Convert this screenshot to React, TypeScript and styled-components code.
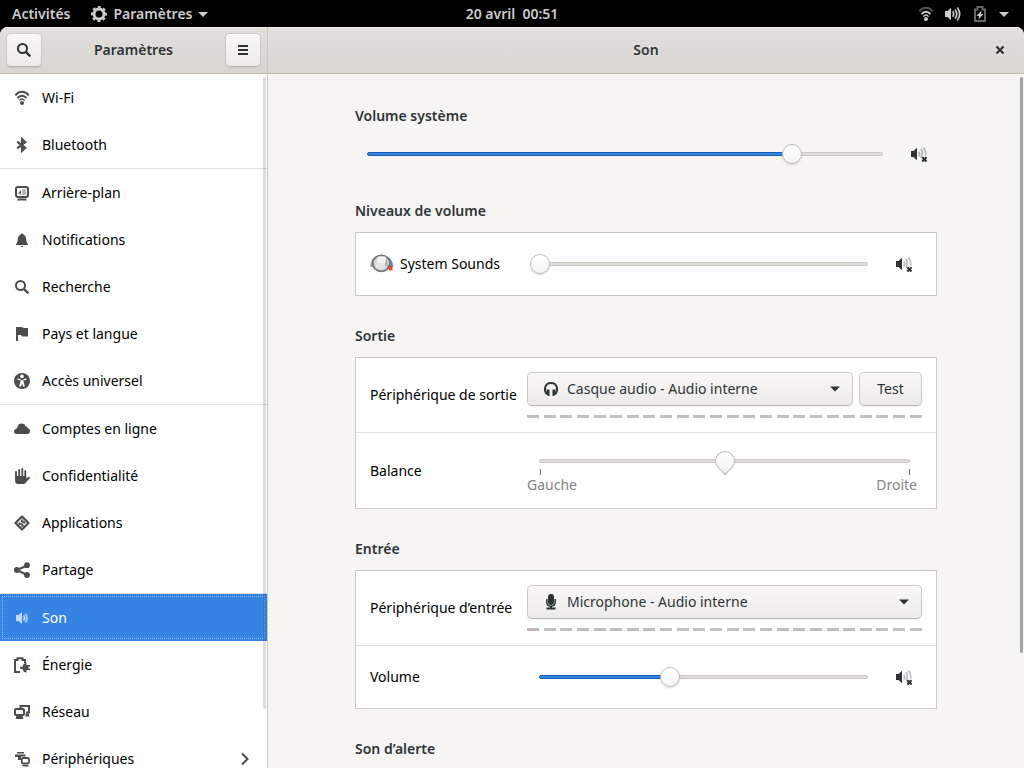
import React, { useState } from "react";
import styled, { createGlobalStyle, css } from "styled-components";

const GlobalStyle = createGlobalStyle`
  * { box-sizing: border-box; }
  html, body, #root { height: 100%; }
  body {
    margin: 0;
    overflow: hidden;
    background: #000;
    color: #000;
    font: 14px/20px "Noto Sans", "Open Sans", sans-serif;
  }
  button, select, input { font: inherit; color: inherit; margin: 0; }
`;

/* ---------- shell ---------- */

const Screen = styled.div`
  display: flex;
  flex-direction: column;
  height: 100vh;
`;

const TopBar = styled.header`
  display: grid;
  grid-template-columns: 1fr auto 1fr;
  align-items: center;
  flex: none;
  height: 27px;
  padding: 0 12px;
  background: #000;
  color: #ccc;
  font-weight: 600;
`;

const TopGroup = styled.div<{ $end?: boolean }>`
  display: flex;
  align-items: center;
  gap: 21px;
  justify-content: ${(p) => (p.$end ? "flex-end" : "flex-start")};
`;

const TopButton = styled.button`
  display: flex;
  align-items: center;
  gap: 6px;
  padding: 0;
  border: 0;
  background: none;
  white-space: pre;
`;

const StatusButton = styled(TopButton)`
  gap: 11px;
  padding-right: 3px;
`;

const Window = styled.div`
  display: grid;
  grid-template-columns: 268px minmax(0, 1fr);
  grid-template-rows: 47px minmax(0, 1fr);
  flex: 1;
  min-height: 0;
  border-radius: 8px 8px 0 0;
  overflow: hidden;
  background: #f6f5f4;
`;

const HeaderBar = styled.div<{ $divider?: boolean }>`
  display: grid;
  grid-template-columns: 36px 1fr 36px;
  align-items: center;
  padding: 0 6px;
  background: linear-gradient(#e1dedb, #dad6d2);
  border-bottom: 1px solid #bfb8b1;
  border-right: ${(p) => (p.$divider ? "1px solid #cdc7c2" : "0")};
  box-shadow: inset 0 1px #f4f2f1;
  color: #2e3436;
`;

const Title = styled.h1`
  grid-column: 2;
  margin: 0;
  font-size: 14px;
  line-height: 20px;
  font-weight: 600;
  text-align: center;
`;

const raised = css`
  border: 1px solid #cdc7c2;
  border-bottom-color: #bfb8b1;
  border-radius: 5px;
  background: linear-gradient(#f6f5f4 20%, #edebe9);
  box-shadow: inset 0 1px #fff, 0 1px 2px rgba(0, 0, 0, 0.07);
  color: #2e3436;
`;

const HeaderButton = styled.button<{ $flat?: boolean }>`
  display: grid;
  place-items: center;
  width: 36px;
  height: 34px;
  padding: 0;
  ${raised}
  ${(p) => p.$flat && css`
    border-color: transparent;
    background: none;
    box-shadow: none;
  `}
`;

/* ---------- sidebar ---------- */

const Sidebar = styled.nav`
  position: relative;
  min-height: 0;
  overflow: hidden;
  background: #fff;
  border-right: 1px solid #cdc7c2;
`;

const NavGroup = styled.ul`
  margin: 0;
  padding: 0;
  list-style: none;
  & + & { border-top: 1px solid #dfdfde; }
`;

const NavLink = styled.a<{ $active?: boolean }>`
  display: flex;
  align-items: center;
  gap: 12px;
  height: 47px;
  padding: 0 14px;
  color: #000;
  text-decoration: none;
  & > svg { color: #4c4c4c; flex: none; }
  & > svg:last-child { margin-left: auto; }
  ${(p) => p.$active && css`
    background: #3584e4;
    color: #fff;
    outline: 1px dotted rgba(255, 255, 255, 0.45);
    outline-offset: -3px;
    & > svg { color: #c2daf7; }
  `}
`;

const ScrollThumb = styled.div<{ $strong?: boolean }>`
  position: absolute;
  top: 3px;
  right: 1px;
  width: 3px;
  height: ${(p) => (p.$strong ? "83%" : "91%")};
  border-radius: 2px;
  background: ${(p) => (p.$strong ? "#a3a5a5" : "rgba(46, 52, 54, 0.17)")};
`;

/* ---------- panel ---------- */

const Panel = styled.main`
  position: relative;
  min-height: 0;
  overflow: hidden;
  padding: 32px 86px 0;
`;

const Column = styled.div`
  display: flex;
  flex-direction: column;
  gap: 30px;
  max-width: 582px;
  margin: 0 auto;
`;

const Section = styled.section`
  display: flex;
  flex-direction: column;
  gap: 11px;
`;

const Heading = styled.h2`
  margin: 0;
  font-size: 14px;
  line-height: 20px;
  font-weight: 600;
  color: #2e3436;
`;

const Card = styled.div`
  border: 1px solid #cdc7c2;
  background: #fff;
`;

const Row = styled.div<{ $height: number }>`
  display: grid;
  grid-template-columns: 157px minmax(0, 1fr);
  align-items: center;
  min-height: ${(p) => p.$height}px;
  padding: 0 14px;
  & + & { border-top: 1px solid #e1dfdd; }
`;

const RowLabel = styled.label`
  display: flex;
  align-items: center;
  gap: 6px;
  white-space: nowrap;
`;

const SliderLine = styled.div`
  display: flex;
  align-items: center;
  height: 34px;
`;

const SliderBox = styled.div`
  display: grid;
  align-items: center;
  flex: 1;
  margin: 0 18px 0 12px;
  & > * { grid-area: 1 / 1; }
`;

const Trough = styled.div`
  height: 4px;
  border: 1px solid #cdc7c2;
  border-radius: 2px;
  background: #e1dedb;
`;

const Fill = styled.div`
  height: 4px;
  border: 1px solid #185fb4;
  border-radius: 2px;
  background: #3584e4;
`;

const Range = styled.input<{ $pin?: boolean }>`
  appearance: none;
  width: calc(100% + 18px);
  height: 20px;
  margin: 0 -9px;
  background: none;
  outline: none;
  &::-webkit-slider-thumb {
    appearance: none;
    width: 20px;
    height: 20px;
    border: 1px solid #c3bcb6;
    border-radius: ${(p) => (p.$pin ? "50% 50% 0 50%" : "50%")};
    background: ${(p) => (p.$pin ? "linear-gradient(135deg, #fff 20%, #f1f0ef)" : "linear-gradient(#fff 20%, #f4f3f2)")};
    box-shadow: ${(p) => (p.$pin ? "none" : "0 1px 2px rgba(0, 0, 0, 0.15)")};
    transform: ${(p) => (p.$pin ? "rotate(45deg)" : "none")};
  }
`;

const MuteButton = styled.button`
  display: grid;
  place-items: center;
  width: 36px;
  height: 34px;
  padding: 0;
  border: 0;
  background: none;
  color: #2e3436;
`;

const DeviceField = styled.div`
  display: flex;
  flex-direction: column;
  gap: 9px;
`;

const DeviceControls = styled.div`
  display: flex;
  gap: 6px;
`;

const SelectBox = styled.div`
  display: grid;
  align-items: center;
  flex: 1;
  color: #2e3436;
  & > * { grid-area: 1 / 1; }
  & > svg { pointer-events: none; z-index: 1; margin: 0 10px 0 16px; }
  & > svg:last-child { justify-self: end; }
`;

const Select = styled.select`
  appearance: none;
  width: 100%;
  height: 34px;
  padding: 0 34px 0 39px;
  ${raised}
`;

const TestButton = styled.button`
  width: 63px;
  height: 34px;
  padding: 0;
  ${raised}
`;

const Level = styled.div`
  display: flex;
  justify-content: space-between;
`;

const LevelCell = styled.span<{ $warm?: boolean }>`
  width: 12px;
  height: 3px;
  background: ${(p) => (p.$warm ? "#c4b5b8" : "#c0c0c0")};
`;

const Scale = styled.div`
  display: flex;
  flex-direction: column;
  padding-top: 6px;
`;

const ScaleSlider = styled(SliderBox)`
  margin: 0 12px;
  grid-template-rows: 16px;
  flex: none;
  z-index: 1;
`;

const Ticks = styled.div`
  display: flex;
  justify-content: space-between;
  height: 6px;
  margin: 0 12px 0 13px;
  & > span { width: 1px; background: #77797a; }
`;

const ScaleLabels = styled.div`
  display: flex;
  justify-content: space-between;
  padding-right: 5px;
  color: #828486;
`;

/* ---------- icons ---------- */

const Icon = ({ children, size = 16 }: { children: React.ReactNode; size?: number }) => (
  <svg width={size} height={size} viewBox={`0 0 ${size} ${size}`} fill="currentColor" aria-hidden="true">
    {children}
  </svg>
);

const line = (width: number) => ({ fill: "none", stroke: "currentColor", strokeWidth: width });

const WifiIcon = ({ dim }: { dim?: boolean }) => (
  <Icon>
    <path d="M1.300 5.300C5 .6 11 .6 14.700 5.300" {...line(2)} opacity={dim ? 0.4 : 1} />
    <path d="M3.500 8.100C6 4.900 10 4.900 12.500 8.100" {...line(2)} />
    <path d="M5.400 10.600C7 8.600 9 8.600 10.600 10.600" {...line(1.5)} />
    <circle cx="8" cy="13" r="2" />
  </Icon>
);

const BluetoothIcon = () => (
  <Icon>
    <path d="M3.200 4.600l8 6.200L8 13.800V2.200l3.200 3-8 6.200" {...line(2.2)} />
  </Icon>
);

const BackgroundIcon = () => (
  <Icon>
    <rect x="2" y="2" width="12" height="10" rx="2" {...line(2)} />
    <path d="M4 8.500l3-3.500v3.500z" />
    <path d="M8 4h4v6H5V9h3z" opacity=".4" />
    <path d="M4 13.500h8l1 2H3z" />
  </Icon>
);

const BellIcon = () => (
  <Icon>
    <path d="M8 1.500c1 0 1.500.6 1.600 1.200C11.600 3.500 12 5 12.200 7c.2 2.500.6 4 1.800 5.200V13H2v-.8C3.200 11 3.600 9.500 3.800 7 4 5 4.400 3.500 6.400 2.700 6.500 2.100 7 1.500 8 1.500z" />
    <path d="M6.500 14h3c-.3.8-.9 1-1.500 1s-1.200-.2-1.500-1z" />
  </Icon>
);

const SearchIcon = () => (
  <Icon>
    <circle cx="6.500" cy="6.500" r="4.500" {...line(2)} />
    <path d="M10 10l4.300 4.300" {...line(2.4)} />
  </Icon>
);

const FlagIcon = () => (
  <Icon>
    <path d="M2 1h5.500c1 0 1.500 1 2.500 1h4v8.500H8.500c-1 0-1-1.500-2-1.500H4v6H2z" />
  </Icon>
);

const AccessIcon = () => (
  <Icon>
    <circle cx="8" cy="8" r="8" />
    <circle cx="8" cy="3.400" r="1.800" fill="#fff" />
    <path d="M3.500 5.400L6.500 6v3L5 13.500h2l1-3 1 3h2L9.500 9V6l3-.6v1.300l-2 .6H5.500l-2-.6z" fill="#fff" />
  </Icon>
);

const CloudIcon = () => (
  <Icon>
    <path d="M7.500 2.500c2.200 0 3.700 1.200 4.200 3 .9-.2 2 .4 2 1.700 1.500.3 2.300 1.300 2.300 2.800 0 2-1.200 3-2.700 3H2.500C1 13 0 12 0 10.500 0 9 1 8 2.500 8c-.1-1 .2-1.500 1-1.800.2-2.300 1.900-3.700 4-3.700z" />
  </Icon>
);

const HandIcon = () => (
  <Icon>
    <path d="M2 4v6M5.200 2v7M8.300 1v8M11.300 3v7" {...line(1.8)} strokeLinecap="round" />
    <path d="M1.100 8h11.100v2.500l2-1.500h1.800c-.2 2-1.500 2.500-2.500 3.500-1.300 1.500-2 3.500-4 3.500H4c-2 0-2.900-1.500-2.900-3.500z" />
  </Icon>
);

const AppsIcon = () => (
  <Icon>
    <path d="M8 1.500L14.500 8 8 14.500 1.500 8z" {...line(2.2)} strokeLinejoin="round" />
    <path d="M8 4l1.800 1.800H8.700v1.700H6.800V5.800zM11.800 7.500L10 9.300V8.200H8.500V6.300h2.300zM4.200 8.500L6 6.700v1.300h1.700v1.700H6v1zM8 12.200l-1.400-1.700h1.100V8.700h1.700v1.700h1z" />
  </Icon>
);

const ShareIcon = () => (
  <Icon>
    <path d="M13 3.500L3 8l10 5" {...line(2)} />
    <circle cx="13" cy="3.200" r="2.900" />
    <circle cx="2.900" cy="8" r="2.900" />
    <circle cx="13" cy="13" r="2.900" />
  </Icon>
);

const SpeakerIcon = () => (
  <Icon>
    <path d="M2 5h2.500L8 2v12L4.500 11H2z" />
    <path d="M9.600 5.500c1.200 1.500 1.200 3.500 0 5" {...line(1.8)} />
    <path d="M11.400 3.500c2.300 2.500 2.300 6.500 0 9" {...line(1.8)} opacity=".8" />
  </Icon>
);

const SpeakerLoudIcon = () => (
  <Icon>
    <path d="M0 5h2.500L6 1.800v12.400L2.500 11H0z" />
    <path d="M7.600 5.300c1.300 1.600 1.300 3.800 0 5.400M10 3.500c2.100 2.700 2.100 6.300 0 9M12.300 1.500c2.900 4 2.900 9 0 13" {...line(1.7)} />
  </Icon>
);

const MutedIcon = () => (
  <Icon>
    <path d="M0 5h2.500L6 1.800v12.400L2.500 11H0z" />
    <path d="M7.700 5.500c1 1.500 1 3.500 0 5M10 3c1.400 2.500 1.400 6 0 8.500M12.500 1.500c2 2.500 2.500 5 2.200 8" {...line(1.7)} opacity=".35" />
    <path d="M11.300 11.300l4.200 4.200M15.500 11.300l-4.200 4.200" {...line(2.2)} />
  </Icon>
);

const PowerIcon = () => (
  <Icon>
    <path d="M6 15H1V3h2.500V1.300h5V3H11v3" {...line(2)} />
    <path d="M12.500 6v2H16v1.600h-1.500v1.800H16V13h-3.500v2.500C10 15.500 9 14 8.500 12H6V9.800h2.500C9 7.500 10 6 12.500 6z" />
  </Icon>
);

const NetworkIcon = () => (
  <Icon>
    <path d="M6.500 4V2H15v6.500h-3" {...line(2)} />
    <rect x="1" y="5" width="9" height="6" rx="1" {...line(2)} />
    <path d="M2.500 12h6L9.500 15h-8zM11.500 9.500h3l1 3h-4z" />
  </Icon>
);

const DevicesIcon = () => (
  <Icon>
    <path d="M3 1h7v1.500H3zM1 3.500h10.500V5.500H7V9H4V6H1z" />
    <rect x="7.800" y="7" width="7.200" height="5.500" rx="1.500" {...line(1.8)} />
    <path d="M8 14h7l-1 1.500H9z" />
  </Icon>
);

const ChevronIcon = () => (
  <Icon>
    <path d="M5 2.500L10.500 8 5 13.500" {...line(2)} />
  </Icon>
);

const ArrowIcon = () => (
  <Icon>
    <path d="M3 5.500h10L8 10.500z" />
  </Icon>
);

const TopArrowIcon = () => (
  <Icon size={10}>
    <path d="M0 3h10L5 8z" />
  </Icon>
);

const MenuIcon = () => (
  <Icon>
    <path d="M3 3h10v2H3zM3 7h10v2H3zM3 11h10v2H3z" />
  </Icon>
);

const CloseIcon = () => (
  <Icon>
    <path d="M4.500 4.500l7 7M11.500 4.500l-7 7" {...line(2.2)} />
  </Icon>
);

const GearIcon = () => (
  <Icon>
    <circle cx="8" cy="8" r="5" {...line(3)} />
    <circle cx="8" cy="8" r="6.900" {...line(2.2)} strokeDasharray="3 2.420" strokeDashoffset="1.500" />
  </Icon>
);

const BatteryIcon = () => (
  <Icon>
    <path d="M3 3.500h2.500V1h5v2.500H13V15H3z" {...line(2)} opacity=".5" />
    <path d="M9.500 4.500L4.500 10h2.500l-.5 3.500 5-5.500H9z" />
  </Icon>
);

const HeadphonesIcon = () => (
  <Icon>
    <path d="M3.800 13.500C.5 9 1.500 2 8 2s7.500 7 4.200 11.500" {...line(1.9)} />
    <path d="M3.500 8.500h3V15H5L3.500 13zM12.500 8.500h-3V15H11l1.500-2z" />
  </Icon>
);

const MicIcon = () => (
  <Icon>
    <rect x="5" y="0" width="6" height="11" rx="3" />
    <path d="M3.800 5v3c0 5.500 8.400 5.500 8.400 0V5" {...line(1.5)} />
    <path d="M7 12h2v1.500h3.500V15.500h-9v-2H7z" />
  </Icon>
);

const KnobIcon = () => (
  <svg width="24" height="24" viewBox="0 0 24 24" aria-hidden="true">
    <path d="M1.500 15C.8 9 5 4 11.500 4S22.500 9 22.300 15" fill="none" stroke="#8aa3bf" strokeWidth="2" />
    <path d="M17.500 5.500c3.500 2 5 5 4.800 9.500L18 14z" fill="#5f82aa" />
    <ellipse cx="11.300" cy="11.300" rx="8.600" ry="8" fill="#d6d6d4" stroke="#747673" strokeWidth="1.800" />
    <path d="M7.500 5h8.500l1 6.500-2.500 5.500-4 1-5-2z" fill="#e4e4e2" />
    <path d="M8 4.500h7.500l.5 5.500-3.500 1.500-5.500-.5z" fill="#f3f3f2" />
    <path d="M16 5l1.500 6.500-2.500 4 .5-5z" fill="#a5a6a4" />
    <path d="M19 13.700h3.500V18.300H19z" fill="#e5482f" />
    <path d="M17.500 13l2 2-1.500 2z" fill="#5a5c59" />
  </svg>
);

/* ---------- parts ---------- */

type SliderProps = { id: string; label: string; initial: number };

function Slider({ id, label, initial }: SliderProps) {
  const [value, setValue] = useState(initial);
  return (
    <SliderBox>
      <Trough />
      {value > 0 && <Fill style={{ width: `${value}%` }} />}
      <Range
        id={id}
        type="range"
        min={0}
        max={100}
        step={0.1}
        value={value}
        aria-label={label}
        onChange={(e) => setValue(Number(e.target.value))}
      />
    </SliderBox>
  );
}

function VolumeLine(props: SliderProps) {
  return (
    <SliderLine>
      <Slider {...props} />
      <MuteButton type="button" aria-label="Muet">
        <MutedIcon />
      </MuteButton>
    </SliderLine>
  );
}

function DeviceSelect({ id, icon, option }: { id: string; icon: React.ReactNode; option: string }) {
  return (
    <SelectBox>
      {icon}
      <Select id={id}>
        <option>{option}</option>
      </Select>
      <ArrowIcon />
    </SelectBox>
  );
}

function LevelBar({ label, warm }: { label: string; warm?: boolean }) {
  return (
    <Level role="meter" aria-label={label} aria-valuemin={0} aria-valuemax={24} aria-valuenow={0}>
      {Array.from({ length: 24 }, (_, i) => (
        <LevelCell key={i} $warm={warm && i === 0} />
      ))}
    </Level>
  );
}

type NavItem = { label: string; icon: React.ReactNode; active?: boolean; more?: boolean };

const navGroups: NavItem[][] = [
  [
    { label: "Wi-Fi", icon: <WifiIcon /> },
    { label: "Bluetooth", icon: <BluetoothIcon /> },
  ],
  [
    { label: "Arrière-plan", icon: <BackgroundIcon /> },
    { label: "Notifications", icon: <BellIcon /> },
    { label: "Recherche", icon: <SearchIcon /> },
    { label: "Pays et langue", icon: <FlagIcon /> },
    { label: "Accès universel", icon: <AccessIcon /> },
  ],
  [
    { label: "Comptes en ligne", icon: <CloudIcon /> },
    { label: "Confidentialité", icon: <HandIcon /> },
    { label: "Applications", icon: <AppsIcon /> },
    { label: "Partage", icon: <ShareIcon /> },
  ],
  [
    { label: "Son", icon: <SpeakerIcon />, active: true },
    { label: "Énergie", icon: <PowerIcon /> },
    { label: "Réseau", icon: <NetworkIcon /> },
    { label: "Périphériques", icon: <DevicesIcon />, more: true },
  ],
];

export default function App() {
  const [balance, setBalance] = useState(50);
  return (
    <Screen>
      <GlobalStyle />
      <TopBar>
        <TopGroup>
          <TopButton type="button">Activités</TopButton>
          <TopButton type="button">
            <GearIcon />
            Paramètres
            <TopArrowIcon />
          </TopButton>
        </TopGroup>
        <TopButton type="button">{"20 avril  00:51"}</TopButton>
        <TopGroup $end>
          <StatusButton type="button" aria-label="État du système">
            <WifiIcon dim />
            <SpeakerLoudIcon />
            <BatteryIcon />
            <TopArrowIcon />
          </StatusButton>
        </TopGroup>
      </TopBar>

      <Window>
        <HeaderBar $divider>
          <HeaderButton type="button" aria-label="Rechercher">
            <SearchIcon />
          </HeaderButton>
          <Title>Paramètres</Title>
          <HeaderButton type="button" aria-label="Menu">
            <MenuIcon />
          </HeaderButton>
        </HeaderBar>
        <HeaderBar>
          <Title as="div">Son</Title>
          <HeaderButton type="button" aria-label="Fermer" $flat>
            <CloseIcon />
          </HeaderButton>
        </HeaderBar>

        <Sidebar>
          {navGroups.map((items, index) => (
            <NavGroup key={index}>
              {items.map((item) => (
                <li key={item.label}>
                  <NavLink href="#" $active={item.active} aria-current={item.active ? "page" : undefined}>
                    {item.icon}
                    <span>{item.label}</span>
                    {item.more && <ChevronIcon />}
                  </NavLink>
                </li>
              ))}
            </NavGroup>
          ))}
          <ScrollThumb />
        </Sidebar>

        <Panel>
          <Column>
            <Section>
              <Heading>Volume système</Heading>
              <VolumeLine id="system-volume" label="Volume système" initial={82.5} />
            </Section>

            <Section>
              <Heading>Niveaux de volume</Heading>
              <Card>
                <Row $height={62}>
                  <RowLabel htmlFor="system-sounds">
                    <KnobIcon />
                    System Sounds
                  </RowLabel>
                  <VolumeLine id="system-sounds" label="System Sounds" initial={0} />
                </Row>
              </Card>
            </Section>

            <Section>
              <Heading>Sortie</Heading>
              <Card>
                <Row $height={74}>
                  <RowLabel htmlFor="output-device">Périphérique de sortie</RowLabel>
                  <DeviceField>
                    <DeviceControls>
                      <DeviceSelect id="output-device" icon={<HeadphonesIcon />} option="Casque audio - Audio interne" />
                      <TestButton type="button">Test</TestButton>
                    </DeviceControls>
                    <LevelBar label="Niveau de sortie" />
                  </DeviceField>
                </Row>
                <Row $height={76}>
                  <RowLabel htmlFor="balance">Balance</RowLabel>
                  <Scale>
                    <ScaleSlider>
                      <Trough />
                      <Range
                        $pin
                        id="balance"
                        type="range"
                        min={0}
                        max={100}
                        value={balance}
                        onChange={(e) => setBalance(Number(e.target.value))}
                      />
                    </ScaleSlider>
                    <Ticks>
                      <span />
                      <span />
                      <span />
                    </Ticks>
                    <ScaleLabels>
                      <span>Gauche</span>
                      <span>Droite</span>
                    </ScaleLabels>
                  </Scale>
                </Row>
              </Card>
            </Section>

            <Section>
              <Heading>Entrée</Heading>
              <Card>
                <Row $height={74}>
                  <RowLabel htmlFor="input-device">Périphérique d’entrée</RowLabel>
                  <DeviceField>
                    <DeviceControls>
                      <DeviceSelect id="input-device" icon={<MicIcon />} option="Microphone - Audio interne" />
                    </DeviceControls>
                    <LevelBar label="Niveau d’entrée" warm />
                  </DeviceField>
                </Row>
                <Row $height={63}>
                  <RowLabel htmlFor="input-volume">Volume</RowLabel>
                  <VolumeLine id="input-volume" label="Volume" initial={39.7} />
                </Row>
              </Card>
            </Section>

            <Section>
              <Heading>Son d’alerte</Heading>
            </Section>
          </Column>
          <ScrollThumb $strong />
        </Panel>
      </Window>
    </Screen>
  );
}
